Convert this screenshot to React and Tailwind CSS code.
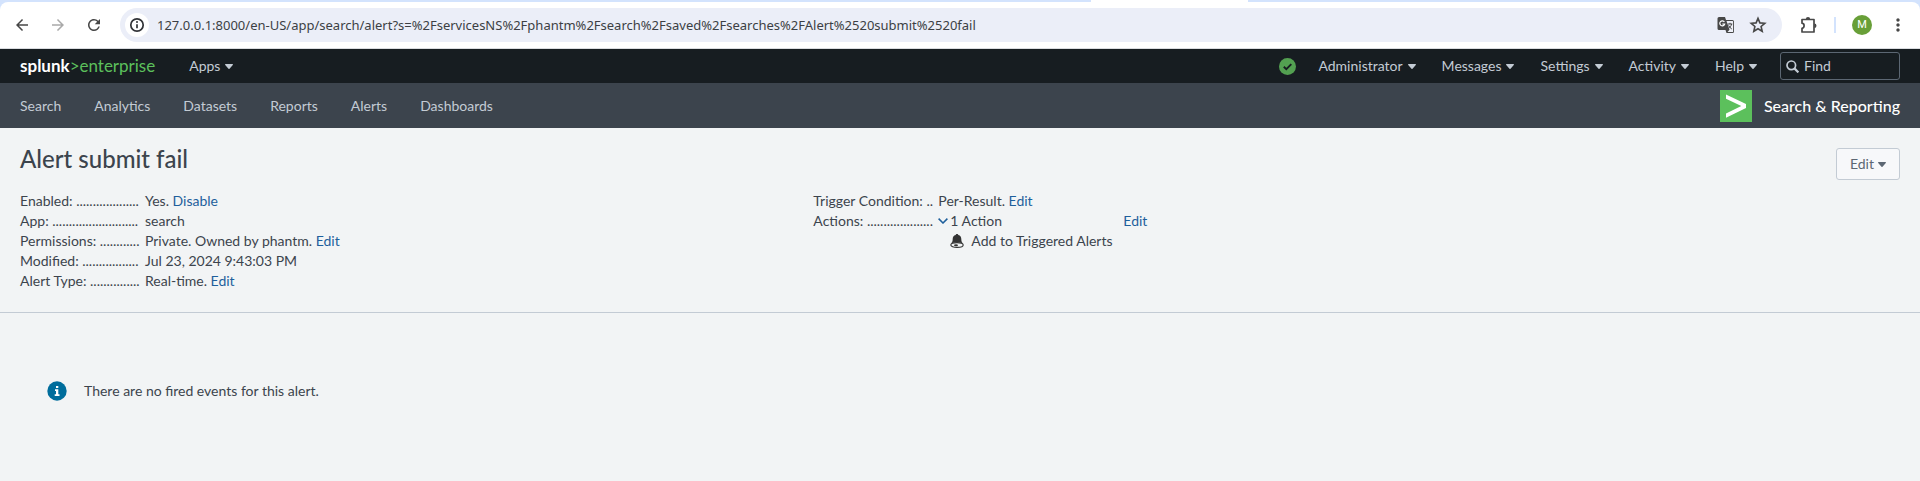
import React from 'react';
import { MdArrowBack, MdArrowForward, MdRefresh, MdMoreVert } from 'react-icons/md';

function Caret() {
  return (
    <svg className="h-[5px] w-2 shrink-0" viewBox="0 0 8 5" fill="currentColor" aria-hidden="true">
      <path d="M0.6 0h6.8c.5 0 .8.5.4.9L4.5 4.7c-.3.3-.7.3-1 0L.2.9C-.2.500.1 0 .6 0z" />
    </svg>
  );
}

function SiteInfoIcon() {
  return (
    <svg className="size-4" viewBox="0 0 16 16" fill="none" aria-hidden="true">
      <circle cx="8" cy="8" r="6.2" stroke="#303236" strokeWidth="1.7" />
      <path d="M8 7.2v4" stroke="#303236" strokeWidth="1.7" />
      <circle cx="8" cy="5.1" r="1" fill="#303236" />
    </svg>
  );
}

function TranslateIcon() {
  return (
    <svg className="size-[18px]" viewBox="0 0 18 18" aria-hidden="true">
      <path d="M2 1h6l1 3h6.500A1.500 1.500 0 0 1 17 5.500v10a1.500 1.500 0 0 1-1.500 1.500H9.500l-1-3H2A1.500 1.500 0 0 1 .5 12.500v-10A1.500 1.500 0 0 1 2 1z" fill="#474747" />
      <path d="M9.500 5h6c.4 0 .6.2.6.6v9.800c0 .4-.2.6-.6.6h-5l2-2.200z" fill="#eef0f8" />
      <path d="M7.400 6A2.500 2.500 0 1 0 7.700 8H5.300" fill="none" stroke="#fff" strokeWidth="1.200" />
      <path d="M10.700 8h4.600M13 6.800V8M14.600 8c-.4 2-1.800 3.600-3.200 4.600M11.600 9.400c.8 1.600 1.900 2.600 3.200 3.600" fill="none" stroke="#474747" strokeWidth="1" />
    </svg>
  );
}

function StarIcon() {
  return (
    <svg className="size-[18px]" viewBox="0 0 18 18" fill="none" aria-hidden="true">
      <path d="M9 2.400l1.900 4.500 4.900.4-3.700 3.200 1.100 4.800L9 12.800l-4.200 2.500 1.100-4.800-3.700-3.200 4.900-.4z" stroke="#474747" strokeWidth="1.600" />
    </svg>
  );
}

function PuzzleIcon() {
  return (
    <svg className="size-[18px]" viewBox="0 0 18 18" aria-hidden="true">
      <path d="M2 3.500h12V16H2v-3.700a2.600 2.600 0 0 0 0-5.100z" fill="none" stroke="#474747" strokeWidth="1.700" strokeLinejoin="round" />
      <path d="M5.800 3.300a2.200 2.200 0 0 1 4.400 0zM14.300 7.600a2.200 2.200 0 0 1 0 4.400z" fill="#474747" />
    </svg>
  );
}

function BrowserBar() {
  return (
    <div className="bg-[#d3e3fd]">
      <div className="flex h-[2px]">
        <div className="w-[56.8%]" />
        <div className="w-[8.2%] bg-white" />
      </div>
      <div className="flex h-[47px] items-center rounded-t-lg border-b border-[#dadce0] bg-white pr-3">
        <div className="flex items-center gap-[18px] pl-[13px] text-[#474747]">
          <button type="button" aria-label="Back"><MdArrowBack className="size-[18px]" /></button>
          <button type="button" aria-label="Forward" className="text-[#a9a9a9]"><MdArrowForward className="size-[18px]" /></button>
          <button type="button" aria-label="Reload"><MdRefresh className="size-[18px]" /></button>
        </div>
        <div className="ml-[17px] flex h-[34px] flex-1 items-center rounded-full bg-[#ebeef8] pr-[15px] pl-[5px]">
          <button type="button" aria-label="Site information" className="flex size-6 items-center justify-center rounded-full bg-white">
            <SiteInfoIcon />
          </button>
          <input
            type="text"
            aria-label="Address"
            className="ml-2 min-w-0 flex-1 bg-transparent font-['Noto_Sans',sans-serif] text-[13px] leading-5 text-[#3c3f44] outline-none"
            defaultValue="127.0.0.1:8000/en-US/app/search/alert?s=%2FservicesNS%2Fphantm%2Fsearch%2Fsaved%2Fsearches%2FAlert%2520submit%2520fail"
          />
          <div className="flex items-center gap-[14px]">
            <button type="button" aria-label="Translate"><TranslateIcon /></button>
            <button type="button" aria-label="Bookmark"><StarIcon /></button>
          </div>
        </div>
        <button type="button" aria-label="Extensions" className="ml-[18px]"><PuzzleIcon /></button>
        <div className="ml-4 h-4 w-[2px] bg-[#d3e3fd]" />
        <button type="button" aria-label="Profile" className="ml-4 flex size-5 items-center justify-center rounded-full bg-[#689f38] font-[Roboto,sans-serif] text-[11px] text-white">M</button>
        <button type="button" aria-label="Menu" className="ml-4 text-[#474747]"><MdMoreVert className="size-5" /></button>
      </div>
    </div>
  );
}

function TopBar() {
  return (
    <header className="flex h-[34px] items-center bg-[#171d21] px-5 text-[#c3cbd4]">
      <a href="#home" className="flex items-center text-[17px] leading-5">
        <span className="font-bold text-white">splunk</span>
        <span className="text-[#5cc05c]">&gt;enterprise</span>
      </a>
      <button type="button" className="ml-[34px] flex items-center gap-[5px]">Apps<Caret /></button>
      <div className="ml-auto flex items-center gap-[26px]">
        <button type="button" aria-label="Health status" className="-mr-1">
          <svg className="size-[17px]" viewBox="0 0 17 17" aria-hidden="true">
            <circle cx="8.500" cy="8.500" r="8.500" fill="#53a051" />
            <path d="M4.800 8.800l2.500 2.400 5-5" fill="none" stroke="#171d21" strokeWidth="1.900" />
          </svg>
        </button>
        {['Administrator', 'Messages', 'Settings', 'Activity', 'Help'].map((item) => (
          <button key={item} type="button" className="flex items-center gap-[5px]">{item}<Caret /></button>
        ))}
        <label className="-ml-[3px] flex h-7 w-[120px] items-center gap-[5px] rounded-[3px] border border-[#5c6773] px-[5px]">
          <svg className="size-[13px] shrink-0" viewBox="0 0 13 13" fill="none" stroke="currentColor" aria-hidden="true">
            <circle cx="5.300" cy="5.300" r="4.300" strokeWidth="1.700" />
            <path d="M8.400 8.400l4 4" strokeWidth="2.200" />
          </svg>
          <input type="text" aria-label="Find" placeholder="Find" className="w-full min-w-0 bg-transparent outline-none placeholder:text-[#c3cbd4]" />
        </label>
      </div>
    </header>
  );
}

function AppNav() {
  return (
    <nav className="flex h-[45px] items-center bg-[#3c444d] px-5 text-[#c3cbd4]">
      <div className="flex gap-[33px]">
        {['Search', 'Analytics', 'Datasets', 'Reports', 'Alerts', 'Dashboards'].map((item) => (
          <a key={item} href={`#${item.toLowerCase()}`}>{item}</a>
        ))}
      </div>
      <a href="#app" className="ml-auto flex items-center gap-3 text-[16px] font-medium text-white">
        <svg className="size-8" viewBox="0 0 32 32" aria-hidden="true">
          <rect width="32" height="32" fill="#5cc05c" />
          <path d="M6 4.500l20 9.600v4L6 27.700v-4.300l15.300-7.300L6 8.800z" fill="#fff" />
        </svg>
        Search &amp; Reporting
      </a>
    </nav>
  );
}

function Row({ label, dots, children }) {
  return (
    <div className="flex gap-[5px]">
      <dt className="w-[120px] shrink-0 whitespace-nowrap">{label}: {'.'.repeat(dots)}</dt>
      <dd className="flex-1">{children}</dd>
    </div>
  );
}

function TextLink({ children }) {
  return <a href="#edit" className="text-[#1e5f9c]">{children}</a>;
}

function Details() {
  return (
    <section className="border-b border-[#c3cbd4] px-5 pt-[17px] pb-[21px]">
      <div className="flex items-start justify-between">
        <h1 className="text-[24px] leading-7 font-medium text-[#3c444d]">Alert submit fail</h1>
        <button type="button" className="mt-[3px] flex h-8 items-center gap-1 rounded-[3px] border border-[#c3cbd4] bg-[#f7f8fa] px-[13px] text-[#5c6773]">
          Edit<Caret />
        </button>
      </div>
      <div className="mt-[11px] flex">
        <dl className="w-[42.2%]">
          <Row label="Enabled" dots={19}>Yes. <TextLink>Disable</TextLink></Row>
          <Row label="App" dots={26}>search</Row>
          <Row label="Permissions" dots={12}>Private. Owned by phantm. <TextLink>Edit</TextLink></Row>
          <Row label="Modified" dots={17}>Jul 23, 2024 9:43:03 PM</Row>
          <Row label="Alert Type" dots={15}>Real-time. <TextLink>Edit</TextLink></Row>
        </dl>
        <dl className="flex-1">
          <Row label="Trigger Condition" dots={2}>Per-Result. <TextLink>Edit</TextLink></Row>
          <Row label="Actions" dots={20}>
            <div className="flex">
              <div className="w-[185px]">
                <button type="button" className="flex items-center gap-[2px]">
                  <svg className="h-[6px] w-[10px]" viewBox="0 0 10 6" fill="none" stroke="#1e5f9c" strokeWidth="1.500" aria-hidden="true">
                    <path d="M.6.600L5 5l4.400-4.400" />
                  </svg>
                  1 Action
                </button>
                <div className="flex items-center gap-[7px] pl-3">
                  <svg className="size-[14px]" viewBox="0 0 14 14" aria-hidden="true">
                    <path d="M7 0c.8 0 1.300.5 1.300 1.100C10.500 1.700 11.300 3.300 11.300 5c0 2.200.6 3.400 1.700 4.700C12 8.900 9.700 8.300 7 8.300S2 8.900 1 9.700C2.100 8.400 2.700 7.200 2.700 5c0-1.700.8-3.300 3-3.900C5.700.5 6.200 0 7 0z" fill="#333" />
                    <ellipse cx="7" cy="11" rx="6.200" ry="2.400" fill="none" stroke="#333" strokeWidth="1.100" />
                    <ellipse cx="6" cy="11.200" rx="2" ry="1" fill="#333" />
                  </svg>
                  Add to Triggered Alerts
                </div>
              </div>
              <TextLink>Edit</TextLink>
            </div>
          </Row>
        </dl>
      </div>
    </section>
  );
}

export default function App() {
  return (
    <div className="min-h-screen bg-[#f2f4f5] font-[Lato,sans-serif] text-[14px] leading-5 text-[#3c444d]">
      <BrowserBar />
      <TopBar />
      <AppNav />
      <main>
        <Details />
        <div className="flex items-center gap-[17px] px-[47px] pt-[68px]">
          <svg className="size-5" viewBox="0 0 20 20" aria-hidden="true">
            <circle cx="10" cy="10" r="9.700" fill="#006d9c" />
            <path d="M8 8.300h3.300v5h1.200V15H7.700v-1.700H9V10H8zM9 5h2.300v2H9z" fill="#fff" />
          </svg>
          <p>There are no fired events for this alert.</p>
        </div>
      </main>
    </div>
  );
}
